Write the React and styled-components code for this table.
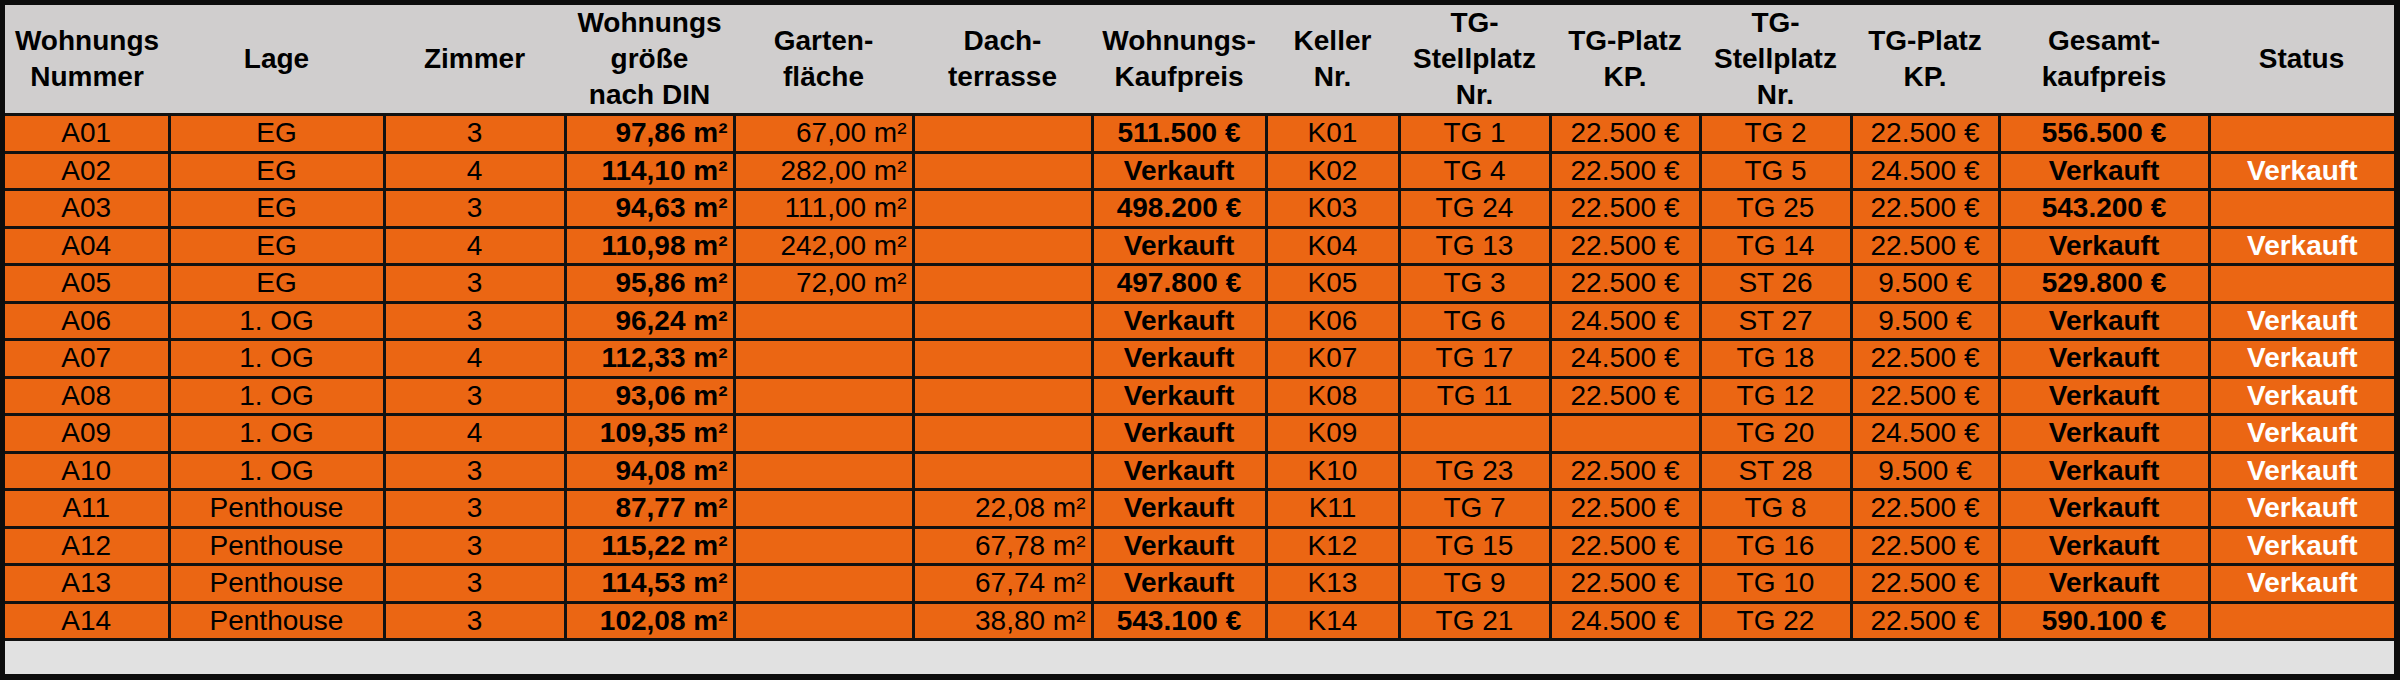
import React from "react";
import styled, { createGlobalStyle } from "styled-components";

const Global = createGlobalStyle`
  html, body { margin: 0; padding: 0; background: #ffffff; }
  body { font-family: "Liberation Sans", Arial, sans-serif; }
`;

const Frame = styled.div`
  width: 2400px;
  height: 680px;
  box-sizing: border-box;
  border-style: solid;
  border-color: #0c0c0c;
  border-width: 5px 6px 6px 5px;
  background: #e1e1e1;
  overflow: hidden;
`;

const Sheet = styled.table`
  width: 2389px;
  border-collapse: collapse;
  table-layout: fixed;
  font-family: "Liberation Sans", Arial, sans-serif;
  font-size: 28px;
  color: #000;
`;

const HeadRow = styled.tr`
  height: 108px;
  background: #d0cece;
`;

const HeadCell = styled.th`
  padding: 0;
  font-weight: bold;
  line-height: 36px;
  text-align: center;
  vertical-align: middle;
  border-bottom: 3px solid #111111;
  white-space: nowrap;
`;

const DataRow = styled.tr`
  height: 37.5px;
  background: #eb6613;
`;

const Cell = styled.td`
  padding: 0 5px;
  line-height: 1;
  white-space: nowrap;
  overflow: hidden;
  text-align: ${(p) => p.$align || "center"};
  font-weight: ${(p) => (p.$bold ? "bold" : "normal")};
  color: ${(p) => (p.$white ? "#ffffff" : "#000000")};
  border-bottom: 3px solid #111111;
  border-right: 3px solid #111111;
  &:last-child { border-right: none; }
`;

const FootRow = styled.tr`
  height: 36px;
  background: #e1e1e1;
`;

const FootCell = styled.td`
  padding: 0;
`;

const widths = [164, 215, 181, 169, 179, 179, 174, 133, 151, 150, 151, 148, 210, 185];

const headers = [
  ["Wohnungs", "Nummer"],
  ["Lage"],
  ["Zimmer"],
  ["Wohnungs", "größe", "nach DIN"],
  ["Garten-", "fläche"],
  ["Dach-", "terrasse"],
  ["Wohnungs-", "Kaufpreis"],
  ["Keller", "Nr."],
  ["TG-", "Stellplatz", "Nr."],
  ["TG-Platz", "KP."],
  ["TG-", "Stellplatz", "Nr."],
  ["TG-Platz", "KP."],
  ["Gesamt-", "kaufpreis"],
  ["Status"],
];

// column formats: align, bold, white
const formats = [
  { align: "center" },
  { align: "center" },
  { align: "center" },
  { align: "right", bold: true },
  { align: "right" },
  { align: "right" },
  { align: "center", bold: true },
  { align: "center" },
  { align: "center" },
  { align: "center" },
  { align: "center" },
  { align: "center" },
  { align: "center", bold: true },
  { align: "center", bold: true, white: true },
];

const rows = [
  ["A01", "EG", "3", "97,86 m²", "67,00 m²", "", "511.500 €", "K01", "TG 1", "22.500 €", "TG 2", "22.500 €", "556.500 €", ""],
  ["A02", "EG", "4", "114,10 m²", "282,00 m²", "", "Verkauft", "K02", "TG 4", "22.500 €", "TG 5", "24.500 €", "Verkauft", "Verkauft"],
  ["A03", "EG", "3", "94,63 m²", "111,00 m²", "", "498.200 €", "K03", "TG 24", "22.500 €", "TG 25", "22.500 €", "543.200 €", ""],
  ["A04", "EG", "4", "110,98 m²", "242,00 m²", "", "Verkauft", "K04", "TG 13", "22.500 €", "TG 14", "22.500 €", "Verkauft", "Verkauft"],
  ["A05", "EG", "3", "95,86 m²", "72,00 m²", "", "497.800 €", "K05", "TG 3", "22.500 €", "ST 26", "9.500 €", "529.800 €", ""],
  ["A06", "1. OG", "3", "96,24 m²", "", "", "Verkauft", "K06", "TG 6", "24.500 €", "ST 27", "9.500 €", "Verkauft", "Verkauft"],
  ["A07", "1. OG", "4", "112,33 m²", "", "", "Verkauft", "K07", "TG 17", "24.500 €", "TG 18", "22.500 €", "Verkauft", "Verkauft"],
  ["A08", "1. OG", "3", "93,06 m²", "", "", "Verkauft", "K08", "TG 11", "22.500 €", "TG 12", "22.500 €", "Verkauft", "Verkauft"],
  ["A09", "1. OG", "4", "109,35 m²", "", "", "Verkauft", "K09", "", "", "TG 20", "24.500 €", "Verkauft", "Verkauft"],
  ["A10", "1. OG", "3", "94,08 m²", "", "", "Verkauft", "K10", "TG 23", "22.500 €", "ST 28", "9.500 €", "Verkauft", "Verkauft"],
  ["A11", "Penthouse", "3", "87,77 m²", "", "22,08 m²", "Verkauft", "K11", "TG 7", "22.500 €", "TG 8", "22.500 €", "Verkauft", "Verkauft"],
  ["A12", "Penthouse", "3", "115,22 m²", "", "67,78 m²", "Verkauft", "K12", "TG 15", "22.500 €", "TG 16", "22.500 €", "Verkauft", "Verkauft"],
  ["A13", "Penthouse", "3", "114,53 m²", "", "67,74 m²", "Verkauft", "K13", "TG 9", "22.500 €", "TG 10", "22.500 €", "Verkauft", "Verkauft"],
  ["A14", "Penthouse", "3", "102,08 m²", "", "38,80 m²", "543.100 €", "K14", "TG 21", "24.500 €", "TG 22", "22.500 €", "590.100 €", ""],
];

export default function App() {
  return (
    <>
      <Global />
      <Frame>
        <Sheet>
          <colgroup>
            {widths.map((w, i) => (
              <col key={i} style={{ width: w }} />
            ))}
          </colgroup>
          <thead>
            <HeadRow>
              {headers.map((lines, i) => (
                <HeadCell key={i}>
                  {lines.map((l, j) => (
                    <React.Fragment key={j}>
                      {j > 0 && <br />}
                      {l}
                    </React.Fragment>
                  ))}
                </HeadCell>
              ))}
            </HeadRow>
          </thead>
          <tbody>
            {rows.map((r, i) => (
              <DataRow key={i}>
                {r.map((v, j) => (
                  <Cell key={j} $align={formats[j].align} $bold={formats[j].bold} $white={formats[j].white}>
                    {v}
                  </Cell>
                ))}
              </DataRow>
            ))}
            <FootRow>
              {widths.map((_, i) => (
                <FootCell key={i} />
              ))}
            </FootRow>
          </tbody>
        </Sheet>
      </Frame>
    </>
  );
}
